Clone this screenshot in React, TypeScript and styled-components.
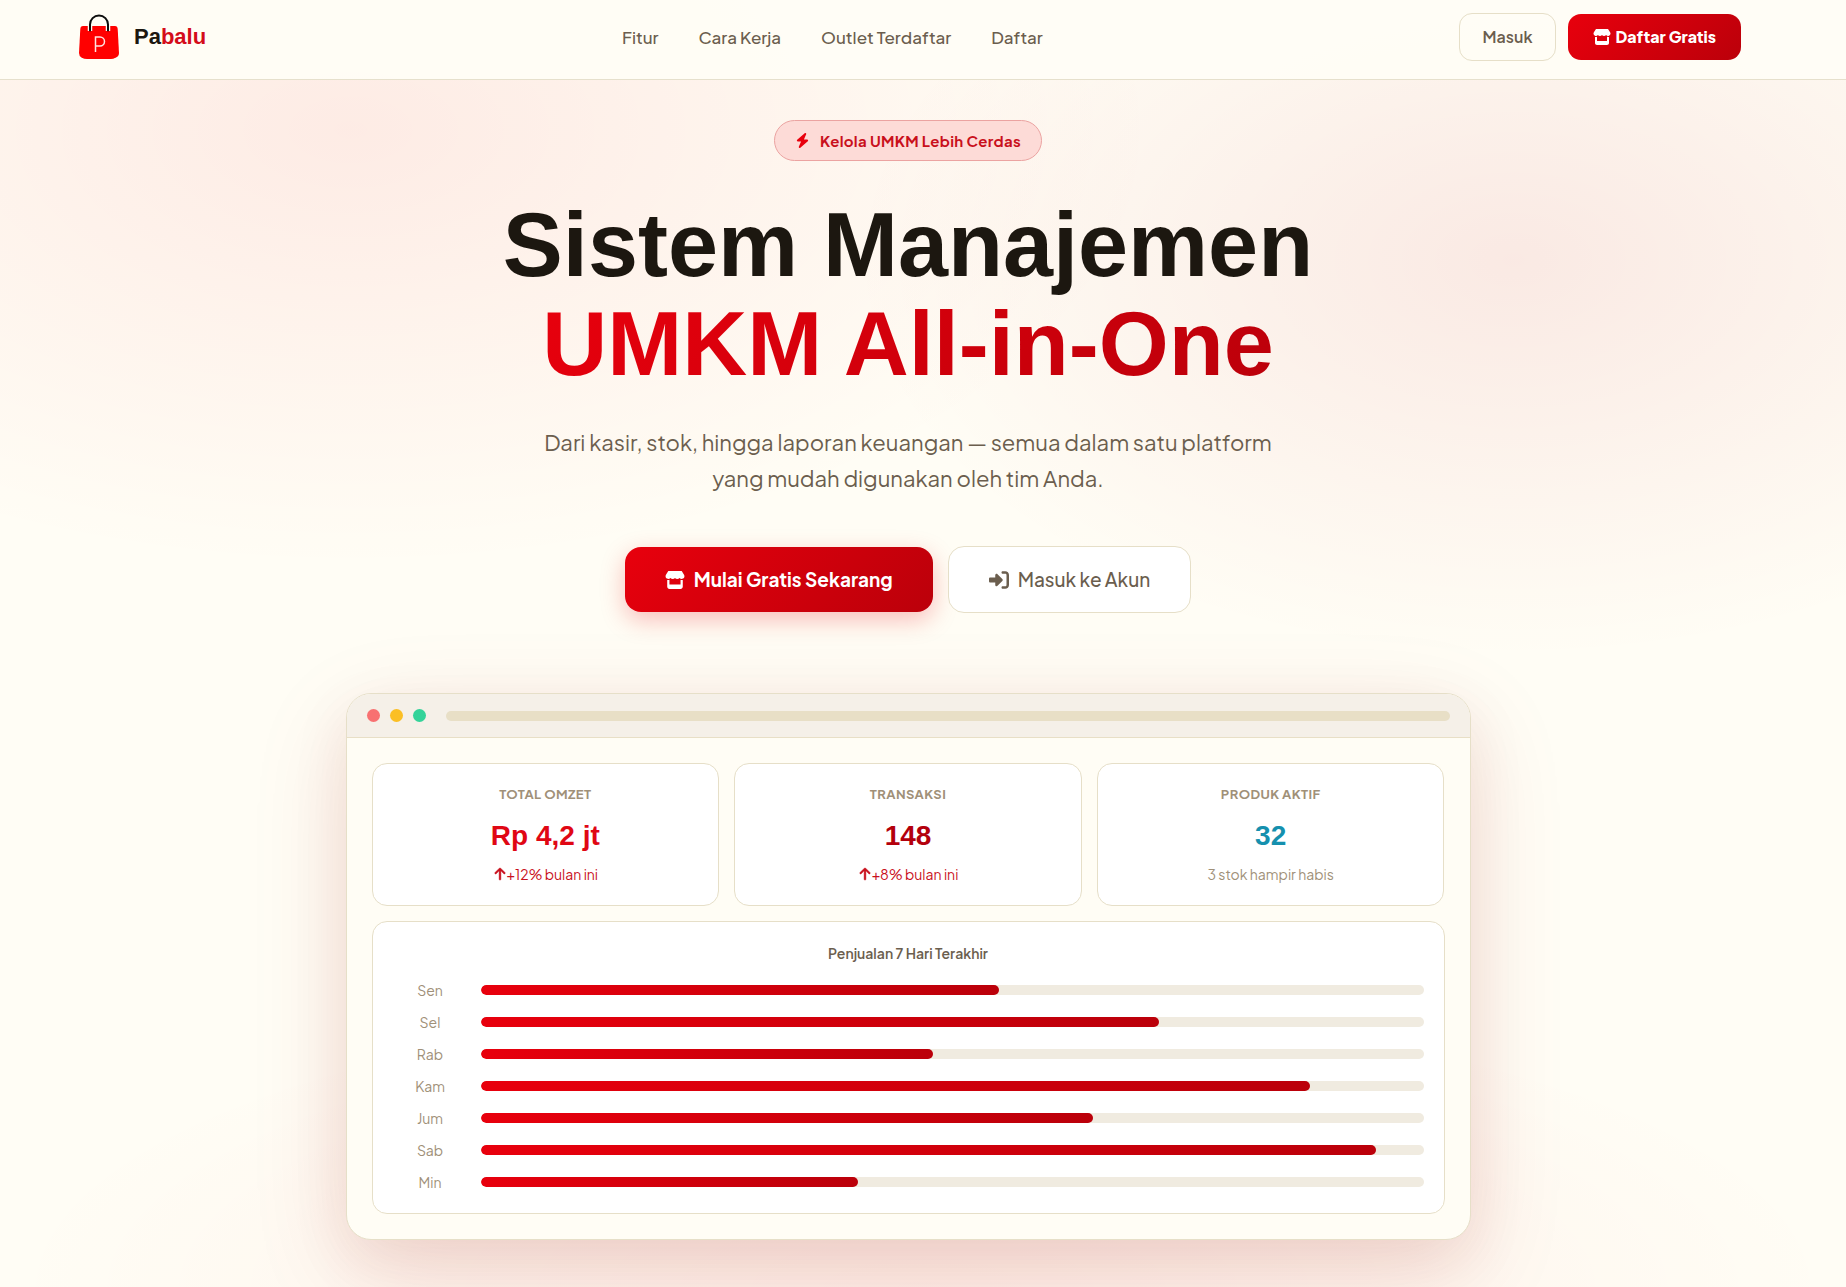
import React from "react";
import styled, { createGlobalStyle } from "styled-components";
import { FaStore, FaBolt, FaRightToBracket, FaArrowUp } from "react-icons/fa6";

const display = `"Liberation Sans", Arial, sans-serif`;
const body = `"Plus Jakarta Sans", Inter, "Liberation Sans", sans-serif`;
const redFill = "linear-gradient(135deg, #e8000d, #bb000a)";

const GlobalStyle = createGlobalStyle`
  *, *::before, *::after { box-sizing: border-box; }
  body {
    margin: 0;
    background: #fffdf5;
    color: #1c1710;
    font-family: ${body};
    -webkit-font-smoothing: antialiased;
  }
  h1, p, ul { margin: 0; padding: 0; }
  ul { list-style: none; }
  a { color: inherit; text-decoration: none; }
  button { font-family: inherit; cursor: pointer; }
`;

const Page = styled.div`
  min-height: 100vh;
  background:
    radial-gradient(ellipse 44% 440px at 19% 130px, rgba(232, 0, 13, 0.07), transparent),
    radial-gradient(ellipse 36% 400px at 82% 260px, rgba(190, 0, 20, 0.08), transparent),
    radial-gradient(ellipse 50% 300px at 50% 1290px, rgba(232, 0, 13, 0.05), transparent),
    #fffdf5;
`;

const Header = styled.header`
  display: flex;
  justify-content: space-between;
  align-items: center;
  height: 80px;
  padding: 0 105px 6px 76px;
  background: rgba(255, 253, 245, 0.95);
  border-bottom: 1px solid #e6e0cc;
`;

const Brand = styled.a`
  display: flex;
  align-items: center;
  gap: 13px;
  font: 700 22px/28px ${display};
`;

const Accent = styled.span`
  color: #d40c1a;
`;

const Nav = styled.nav`
  display: flex;
  gap: 40px;
`;

const NavLink = styled.a`
  font-size: 17px;
  line-height: 24px;
  font-weight: 500;
  color: #6b5e4e;
`;

const HeaderActions = styled.div`
  display: flex;
  justify-content: flex-end;
  align-items: center;
  gap: 12px;
`;

const Button = styled.button<{ $primary?: boolean; $large?: boolean }>`
  display: inline-flex;
  align-items: center;
  justify-content: center;
  gap: ${(p) => (p.$large ? 9 : 4)}px;
  padding: ${(p) => (p.$large ? "20px 40px" : p.$primary ? "12px 25px" : "12px 23px")};
  border: ${(p) => (p.$primary ? "0" : "1px solid #e6dfc8")};
  border-radius: ${(p) => (p.$large ? 16 : 13)}px;
  background: ${(p) => (p.$primary ? redFill : p.$large ? "#fff" : "transparent")};
  color: ${(p) => (p.$primary ? "#fff" : "#6b5e4e")};
  box-shadow: ${(p) => (p.$primary && p.$large ? "0 8px 24px rgba(232, 0, 13, 0.25)" : "none")};
  font-size: ${(p) => (p.$large ? 19 : 16)}px;
  line-height: ${(p) => (p.$large ? 25 : 22)}px;
  font-weight: ${(p) => (p.$primary ? (p.$large ? 700 : 800) : p.$large ? 500 : 600)};
  white-space: nowrap;
`;

const Hero = styled.main`
  display: flex;
  flex-direction: column;
  align-items: center;
  padding: 40px 30px 60px 0;
  text-align: center;
`;

const Badge = styled.span`
  display: inline-flex;
  align-items: center;
  gap: 10px;
  padding: 8px 20px;
  border: 1px solid #eba3a1;
  border-radius: 21px;
  background: #fddbd7;
  color: #c9101c;
  font-size: 15px;
  line-height: 23px;
  font-weight: 700;
  letter-spacing: 0.02em;

  svg { color: #e8000d; }
`;

const Title = styled.h1`
  margin-top: 35px;
  font: 700 90px/99px ${display};
`;

const TitleAccent = styled.span`
  display: table;
  margin: 0 auto;
  background: ${redFill};
  background-clip: text;
  -webkit-background-clip: text;
  color: transparent;
`;

const Lead = styled.p`
  max-width: 780px;
  margin-top: 30px;
  color: #6b5e4e;
  font-size: 22px;
  line-height: 36px;
`;

const Actions = styled.div`
  display: flex;
  align-items: center;
  gap: 15px;
  margin-top: 50px;
`;

const Preview = styled.section`
  width: calc(100% - 80px);
  max-width: 1125px;
  margin-top: 80px;
  border: 1px solid #e6dfc8;
  border-radius: 25px;
  background: #fffdf5;
  box-shadow:
    0 30px 100px rgba(184, 0, 10, 0.12),
    0 20px 60px rgba(120, 40, 20, 0.08);
  overflow: hidden;
`;

const TitleBar = styled.div`
  display: flex;
  align-items: center;
  gap: 10px;
  height: 44px;
  padding: 0 20px;
  border-bottom: 1px solid #e8dfc6;
  background: #f5f0e8;
`;

const Dot = styled.span<{ $color: string }>`
  width: 13px;
  height: 13px;
  border-radius: 50%;
  background: ${(p) => p.$color};
`;

const AddressBar = styled.span`
  flex: 1;
  height: 10px;
  margin-left: 10px;
  border-radius: 5px;
  background: #e8dfc6;
`;

const Dashboard = styled.div`
  display: grid;
  gap: 15px;
  padding: 25px;
`;

const Stats = styled.div`
  display: grid;
  grid-template-columns: repeat(3, 1fr);
  gap: 15px;
`;

const Card = styled.div`
  border: 1px solid #e6dfc8;
  border-radius: 15px;
  background: #fff;
  padding: 20px;
`;

const StatLabel = styled.p`
  color: #a09078;
  font-size: 13px;
  line-height: 20px;
  font-weight: 700;
  letter-spacing: 0.03em;
`;

const StatValue = styled.p<{ $color: string }>`
  margin-top: 10px;
  color: ${(p) => p.$color};
  font: 700 28px/43px ${display};
`;

const StatNote = styled.p<{ $up?: boolean }>`
  display: flex;
  align-items: center;
  justify-content: center;
  color: ${(p) => (p.$up ? "#c9101c" : "#a09078")};
  margin-top: 6px;
  font-size: 14px;
  line-height: 22px;
`;

const ChartTitle = styled.p`
  color: #6b5e4e;
  font-size: 14px;
  line-height: 22px;
  font-weight: 600;
`;

const Bars = styled.ul`
  display: grid;
  gap: 10px;
  margin-top: 15px;
`;

const BarRow = styled.li`
  display: grid;
  grid-template-columns: 75px 1fr;
  align-items: center;
  gap: 13px;
  height: 22px;
`;

const Day = styled.span`
  color: #a09078;
  font-size: 14px;
  line-height: 22px;
`;

const Track = styled.div`
  height: 10px;
  border-radius: 5px;
  background: #f0ebe0;
  overflow: hidden;
`;

const Fill = styled.div`
  height: 100%;
  border-radius: 5px;
  background: linear-gradient(90deg, #e8000d, #bb000a);
`;

const sales = [
  { day: "Sen", value: 55 },
  { day: "Sel", value: 72 },
  { day: "Rab", value: 48 },
  { day: "Kam", value: 88 },
  { day: "Jum", value: 65 },
  { day: "Sab", value: 95 },
  { day: "Min", value: 40 },
];

const stats = [
  { label: "TOTAL OMZET", value: "Rp 4,2 jt", color: "#e00714", note: "+12% bulan ini", up: true },
  { label: "TRANSAKSI", value: "148", color: "#b3000c", note: "+8% bulan ini", up: true },
  { label: "PRODUK AKTIF", value: "32", color: "#1590ae", note: "3 stok hampir habis", up: false },
];

const BagLogo = () => (
  <svg width="45" height="48" viewBox="0 0 45 48" fill="none" aria-hidden="true">
    <path
      d="M7 13h32q2.500 0 2.700 3l1.300 24q0 3-3 4.500t-5 1.500H11q-3 0-5.500-1.500T3 40l1.300-24q.2-3 2.700-3z"
      fill="#ff0000"
    />
    <path d="M14 18v-6.500a9 9 0 0 1 18 0V18" stroke="#fffdf5" strokeWidth="4.500" />
    <path d="M14 17.500v-6a9 9 0 0 1 18 0v6" stroke="#0d0d0d" strokeWidth="2" strokeLinecap="round" />
    <path d="M19.500 39V24h4.500a4.300 4.300 0 0 1 0 9h-4.500" stroke="#ffe3e0" strokeWidth="1.500" />
  </svg>
);

export default function App() {
  return (
    <>
      <GlobalStyle />
      <Page>
        <Header>
          <Brand href="#">
            <BagLogo />
            <span>
              Pa<Accent>balu</Accent>
            </span>
          </Brand>
          <Nav>
            <NavLink href="#fitur">Fitur</NavLink>
            <NavLink href="#cara-kerja">Cara Kerja</NavLink>
            <NavLink href="#outlet">Outlet Terdaftar</NavLink>
            <NavLink href="#daftar">Daftar</NavLink>
          </Nav>
          <HeaderActions>
            <Button type="button">Masuk</Button>
            <Button type="button" $primary>
              <FaStore size={18} />
              Daftar Gratis
            </Button>
          </HeaderActions>
        </Header>

        <Hero>
          <Badge>
            <FaBolt size={15} />
            Kelola UMKM Lebih Cerdas
          </Badge>
          <Title>
            Sistem Manajemen
            <TitleAccent>UMKM All-in-One</TitleAccent>
          </Title>
          <Lead>
            Dari kasir, stok, hingga laporan keuangan — semua dalam satu platform
            <br />
            yang mudah digunakan oleh tim Anda.
          </Lead>
          <Actions>
            <Button type="button" $primary $large>
              <FaStore size={20} />
              Mulai Gratis Sekarang
            </Button>
            <Button type="button" $large>
              <FaRightToBracket size={20} />
              Masuk ke Akun
            </Button>
          </Actions>

          <Preview>
            <TitleBar>
              <Dot $color="#f87171" />
              <Dot $color="#fbbf24" />
              <Dot $color="#34d399" />
              <AddressBar />
            </TitleBar>
            <Dashboard>
              <Stats>
                {stats.map((s) => (
                  <Card key={s.label}>
                    <StatLabel>{s.label}</StatLabel>
                    <StatValue $color={s.color}>{s.value}</StatValue>
                    <StatNote $up={s.up}>
                      {s.up && <FaArrowUp size={14} stroke="currentColor" strokeWidth={16} />}
                      {s.note}
                    </StatNote>
                  </Card>
                ))}
              </Stats>
              <Card>
                <ChartTitle>Penjualan 7 Hari Terakhir</ChartTitle>
                <Bars>
                  {sales.map((s) => (
                    <BarRow key={s.day}>
                      <Day>{s.day}</Day>
                      <Track>
                        <Fill style={{ width: `${s.value}%` }} />
                      </Track>
                    </BarRow>
                  ))}
                </Bars>
              </Card>
            </Dashboard>
          </Preview>
        </Hero>
      </Page>
    </>
  );
}
